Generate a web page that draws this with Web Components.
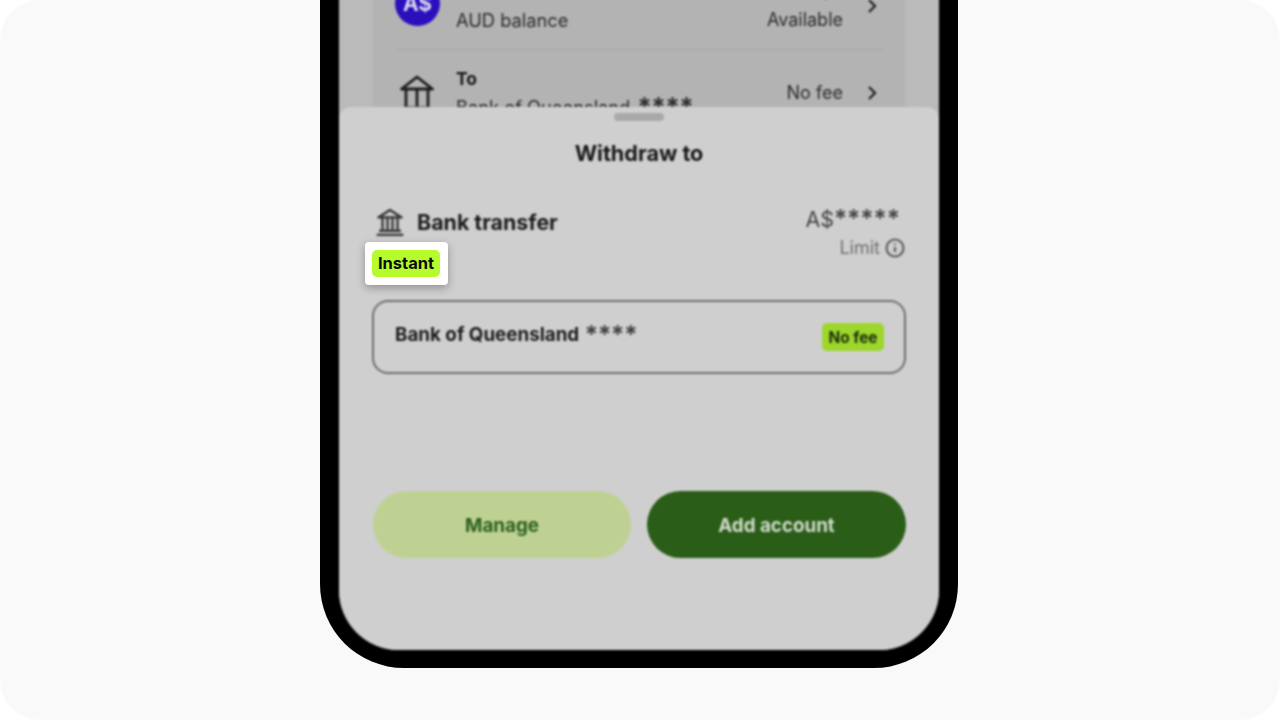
<!DOCTYPE html>
<html>
<head>
<meta charset="utf-8">
<style>
    html, body { margin: 0; height: 100%; background: #fff; overflow: hidden; }
    body { font-family: Inter, "Liberation Sans", sans-serif; }
</style>
</head>
<body>
<help-stage>
    <phone-frame>
        <account-list>
            <account-row slot="from" label="From" value="AUD balance" note="A$0" sub="Available">
                <span slot="icon" class="aud">A$</span>
            </account-row>
            <account-row slot="to" label="To" value="Bank of Queensland" stars="****" sub="No fee">
                <bank-icon slot="icon" size="36"></bank-icon>
            </account-row>
        </account-list>
        <withdraw-sheet slot="sheet"></withdraw-sheet>
        <instant-callout slot="callout">Instant</instant-callout>
    </phone-frame>
</help-stage>

<script>
function defineEl(name, markup, setup) {
    const template = document.createElement('template');
    template.innerHTML = markup;
    customElements.define(name, class extends HTMLElement {
        constructor() {
            super();
            this.attachShadow({ mode: 'open' });
            this.shadowRoot.appendChild(template.content.cloneNode(true));
            if (setup) setup(this, this.shadowRoot);
        }
    });
}

defineEl('help-stage', `
<style>
    :host { display: block; height: 720px; background: #f9f9f9; border-radius: 40px; overflow: hidden; }
    .center { display: flex; justify-content: center; padding-right: 2px; }
</style>
<div class="center"><slot></slot></div>
`);

defineEl('phone-frame', `
<style>
    :host {
        display: block;
        position: relative;
        width: 638px;
        height: 668px;
        box-sizing: border-box;
        padding: 0 19px 18px;
        background: #000;
        border-radius: 0 0 84px 84px;
        overflow: hidden;
    }
    /* starts above the crop so the blur does not darken the top edge */
    .screen {
        position: relative;
        height: 670px;
        margin-top: -20px;
        background: #bababa;
        border-radius: 0 0 60px 60px;
        overflow: hidden;
        filter: blur(1px);
    }
</style>
<div class="screen">
    <slot></slot>
    <slot name="sheet"></slot>
</div>
<slot name="callout"></slot>
`);

defineEl('account-list', `
<style>
    :host {
        display: block;
        margin: -17px 34px 0;
        height: 300px;
        padding: 0 22px;
        background: #b3b3b3;
        color: #1c1c1c;
    }
    hr { margin: 0; border: 0; border-top: 1px solid #a6a6a6; }
</style>
<slot name="from"></slot>
<hr>
<slot name="to"></slot>
`);

defineEl('account-row', `
<style>
    :host { display: block; }
    .row { display: grid; grid-template-columns: 61px 1fr auto 40px; align-items: center; height: 86px; }
    .icon { display: flex; justify-content: flex-start; }
    ::slotted(.aud) {
        width: 45px; height: 45px; border-radius: 50%; margin-top: -5px;
        background: #2a0fbd; color: #d8d8ee;
        display: flex; align-items: center; justify-content: center;
        font-size: 21px; font-weight: 700;
    }
    ::slotted(bank-icon) { margin: -2px 0 0 4px; }
    .label { font-size: 17.5px; font-weight: 700; line-height: 28px; color: #161616; }
    .value { font-size: 18.3px; line-height: 28px; color: #2a2a2a; white-space: nowrap; }
    .value i { font-style: normal; font-size: 26px; font-weight: 600; line-height: 0; vertical-align: -2px; margin-left: 2px; }
    .side { text-align: right; font-size: 18px; line-height: 28px; color: #2a2a2a; }
    .chev { display: flex; justify-content: flex-end; padding-right: 6px; }
    .chev svg { display: block; }
</style>
<div class="row">
    <div class="icon"><slot name="icon"></slot></div>
    <div class="text"><div class="label"></div><div class="value"><span></span> <i></i></div></div>
    <div class="side"><div class="note"></div><div class="sub"></div></div>
    <div class="chev"><svg width="10" height="16" viewBox="0 0 10 16" fill="none" stroke="#1e1e1e" stroke-width="2.200"><path d="M2 2l6 6-6 6"/></svg></div>
</div>
`, (el, root) => {
    root.querySelector('.label').textContent = el.getAttribute('label');
    root.querySelector('.value span').textContent = el.getAttribute('value');
    root.querySelector('.value i').textContent = el.getAttribute('stars') || '';
    root.querySelector('.note').textContent = el.getAttribute('note') || '';
    root.querySelector('.sub').textContent = el.getAttribute('sub') || '';
});

defineEl('bank-icon', `
<style>
    :host { display: block; line-height: 0; }
    .plain, .double { display: none; }
    svg.single .plain, svg.twin .double { display: inline; }
</style>
<svg viewBox="0 0 36 36" fill="none" stroke="currentColor" stroke-width="2.800" stroke-linejoin="round">
    <g class="plain">
        <path d="M2.500 15L18 3l15.500 12z"/>
        <path d="M7 15.500v17M18 15.500v17M29 15.500v17"/>
        <path d="M5 34h26"/>
    </g>
    <g class="double">
        <path d="M4 12.500L18 3.500l14 9z"/>
        <path d="M9 13v14M15 13v14M21 13v14M27 13v14"/>
        <path d="M5 28.500h26M2 33.500h32"/>
    </g>
</svg>
`, (el, root) => {
    const size = el.getAttribute('size') || 30;
    const svg = root.querySelector('svg');
    svg.setAttribute('width', size);
    svg.setAttribute('height', size);
    svg.setAttribute('class', el.hasAttribute('twin') ? 'twin' : 'single');
});

defineEl('pill-button', `
<style>
    :host {
        display: flex; box-sizing: border-box; height: 67px; padding-top: 1px; align-items: center; justify-content: center;
        border-radius: 34px; font-size: 18.8px; font-weight: 700;
    }
    :host([kind="soft"]) { background: #bfd192; color: #2a6020; }
    :host([kind="solid"]) { background: #2a5e18; color: #d2dbcc; }
</style>
<slot></slot>
`);

defineEl('bank-option', `
<style>
    :host {
        display: flex; justify-content: space-between; align-items: flex-start;
        box-sizing: border-box; height: 74px; margin: 0 -1px;
        padding: 20px 20px 0 21px;
        border: 2.500px solid #6e6e6e; border-radius: 16px;
    }
    .name { font-size: 18.8px; font-weight: 700; line-height: 26px; color: #1c1c1c; white-space: nowrap; }
    .name i { font-style: normal; font-size: 24.5px; font-weight: 600; line-height: 0; color: #3c3c3c; vertical-align: -2px; margin-left: 1px; }
    .fee {
        margin-top: 1px; padding: 0 6.500px; height: 28px; line-height: 29px;
        background: #9dd62c; border-radius: 5px;
        font-size: 15.400px; font-weight: 700; color: #1a2e0c;
    }
</style>
<span class="name">Bank of Queensland <i>****</i></span>
<span class="fee">No fee</span>
`);

defineEl('withdraw-sheet', `
<style>
    :host {
        position: absolute; left: 0; right: 0; bottom: 0; top: 127px;
        display: flex; flex-direction: column;
        box-sizing: border-box; padding: 6px 34px 92px;
        background: #cfcfcf; border-radius: 12px 12px 0 0;
        color: #242424;
    }
    .handle { align-self: center; width: 50px; height: 8px; border-radius: 4px; background: #a9a9a9; }
    h2 { margin: 12px 0 0; font-size: 21.6px; line-height: 40px; font-weight: 700; text-align: center; color: #181818; }
    .method { display: flex; justify-content: space-between; margin: 29px 0 0; height: 98px; }
    .title { display: flex; align-items: center; align-self: flex-start; height: 38px; gap: 12px; margin-left: 2px; margin-top: 1px; font-size: 21.4px; font-weight: 700; color: #1c1c1c; }
    bank-icon { color: #333; }
    .limit { text-align: right; padding: 4px 5px 0 0; }
    .amount { font-size: 21.4px; line-height: 26px; color: #444; white-space: nowrap; }
    .amount i { font-style: normal; font-size: 24.5px; font-weight: 600; line-height: 0; }
    .info { display: flex; justify-content: flex-end; align-items: center; gap: 5px; margin: 5px -5px 0 0; font-size: 18px; color: #707070; }
    .actions { display: grid; grid-template-columns: 258px 259px; gap: 16px; margin: auto -1px 0 0; }
</style>
<div class="handle"></div>
<h2>Withdraw to</h2>
<div class="method">
    <div class="title"><bank-icon size="30" twin></bank-icon>Bank transfer</div>
    <div class="limit">
        <div class="amount">A$<i>*****</i></div>
        <div class="info">Limit
            <svg width="20" height="20" viewBox="0 0 20 20" fill="none" stroke="#5e5e5e" stroke-width="2.200"><circle cx="10" cy="10" r="8.500"/><path d="M10 9v5M10 5.500v1.500"/></svg>
        </div>
    </div>
</div>
<bank-option></bank-option>
<div class="actions">
    <pill-button kind="soft">Manage</pill-button>
    <pill-button kind="solid">Add account</pill-button>
</div>
`);

defineEl('instant-callout', `
<style>
    :host {
        position: absolute; left: 45px; top: 242px;
        display: block; padding: 8px 8px 8px 7px;
        background: #fff; border-radius: 4px;
        box-shadow: 0 3px 8px rgba(0,0,0,.3);
    }
    span {
        display: block; width: 68px; height: 27px; line-height: 27px; text-align: center;
        background: #b6fb2c; border-radius: 5px;
        font-size: 16.500px; font-weight: 700; color: #0c0c0c;
    }
</style>
<span><slot></slot></span>
`);
</script>
</body>
</html>
